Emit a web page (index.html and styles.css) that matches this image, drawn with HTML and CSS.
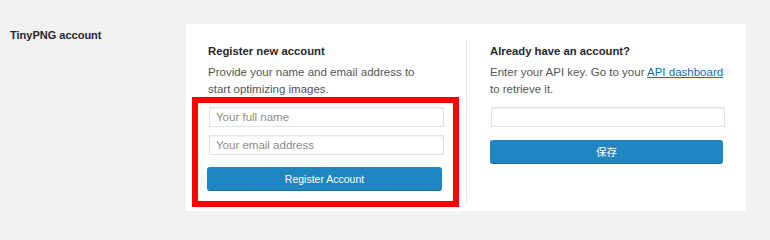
FILE: index.html
```html
<!DOCTYPE html>
<html lang="en">
<head>
<meta charset="utf-8">
<title>TinyPNG account</title>
<link rel="stylesheet" href="styles.css">
</head>
<body>
<div class="row">
  <div class="label">TinyPNG account</div>
  <div class="panel">
    <div class="col col-left">
      <h3 class="heading">Register new account</h3>
      <p class="desc desc-left">Provide your name and email address to start optimizing images.</p>
      <input class="field field-name" type="text" placeholder="Your full name">
      <input class="field field-email" type="text" placeholder="Your email address">
      <button class="btn btn-register">Register Account</button>
    </div>
    <div class="divider"></div>
    <div class="col col-right">
      <h3 class="heading">Already have an account?</h3>
      <p class="desc">Enter your API key. Go to your <a class="link" href="#">API dashboard</a> to retrieve it.</p>
      <input class="field field-key" type="text">
      <button class="btn btn-save">保存</button>
    </div>
    <div class="highlight"></div>
  </div>
</div>
</body>
</html>
```
FILE: styles.css
```css
html, body {
  margin: 0;
  padding: 0;
}
body {
  background: #f1f1f1;
  font-family: "Liberation Sans", Arial, "Noto Sans CJK SC", sans-serif;
  font-size: 11.5px;
  color: #555;
  width: 770px;
  height: 235px;
  overflow: hidden;
}
.row {
  display: flex;
  align-items: flex-start;
}
.label {
  width: 176px;
  padding-left: 10px;
  padding-top: 27px;
  line-height: 16px;
  font-size: 11px;
  font-weight: bold;
  color: #23282d;
}
.panel {
  position: relative;
  margin-top: 24px;
  width: 560px;
  height: 187px;
  box-sizing: border-box;
  background: #fff;
  padding: 16px 21px 8px 22px;
  display: flex;
}
.col {
  padding-top: 3px;
  display: flex;
  flex-direction: column;
}
.col-left {
  width: 236px;
}
.col-right {
  width: 235px;
}
.divider {
  width: 1px;
  background: #e8e8e8;
  margin: 0 23px 0 22px;
}
.heading {
  margin: 0;
  font-size: 11.3px;
  line-height: 16px;
  font-weight: bold;
  color: #23282d;
}
.desc {
  margin: 5px 0 0;
  line-height: 17px;
  color: #555;
}
.desc-left {
  width: 222px;
}
.link {
  color: #0073aa;
  text-decoration: underline;
}
.field {
  box-sizing: border-box;
  height: 20px;
  margin: 0;
  padding: 0 6px;
  border: 1px solid #e2e2e2;
  box-shadow: inset 0 1px 2px rgba(0,0,0,0.06);
  background: #fff;
  font-family: inherit;
  font-size: 11.5px;
  color: #333;
  outline: none;
}
.field::placeholder {
  color: #8a8a8a;
}
.field-name {
  margin-top: 9px;
  width: 235px;
  margin-left: 1px;
}
.field-email {
  margin-top: 8px;
  width: 235px;
  margin-left: 1px;
}
.field-key {
  margin-top: 9px;
  width: 234px;
  margin-left: 1px;
}
.btn {
  box-sizing: border-box;
  height: 23px;
  border: none;
  border-radius: 3px;
  background: #1f86c2;
  color: #fff;
  font-family: inherit;
  font-size: 10.5px;
  padding: 0;
  box-shadow: 0 1px 0 #1a70a3;
}
.btn-register {
  margin-top: 12px;
  width: 235px;
  margin-left: -1px;
}
.btn-save {
  margin-top: 13px;
  width: 233px;
}
.highlight {
  position: absolute;
  left: 6px;
  top: 73px;
  width: 267px;
  height: 110px;
  box-sizing: border-box;
  border: 6px solid #f00;
  pointer-events: none;
}
```
